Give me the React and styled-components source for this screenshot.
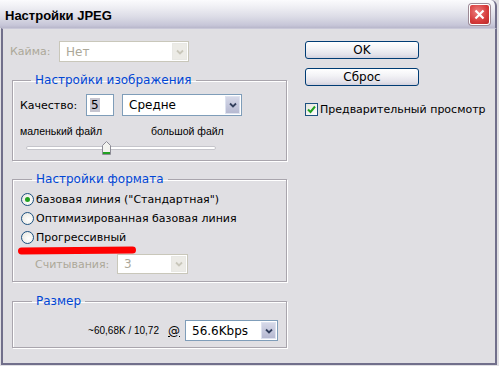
import React from 'react';
import styled, { createGlobalStyle } from 'styled-components';

const Global = createGlobalStyle`
  html, body { margin: 0; padding: 0; background: #e0dfe3; }
  body { font-family: "DejaVu Sans", "Liberation Sans", sans-serif; font-size: 11px; color: #000; }
`;

const Win = styled.div`
  width: 499px;
  height: 366px;
  display: flex;
  flex-direction: column;
  background: #e0dfe3;
  overflow: hidden;
`;

const TitleBar = styled.div`
  height: 28px;
  flex: none;
  display: flex;
  align-items: center;
  justify-content: space-between;
  padding: 0 5px 0 5px;
  box-sizing: border-box;
  margin-right: 2px;
  border-right: 2px solid #716f8b;
  border-top-right-radius: 6px;
  background: linear-gradient(to bottom, #fbfbfd 0%, #efeff4 25%, #dcdce6 60%, #c7c6d8 90%, #b8b7cb 100%);
`;

const Title = styled.div`
  font-family: "Liberation Sans", Arial, sans-serif;
  font-weight: bold;
  font-size: 13px;
  padding-top: 2px;
`;

const CloseBtn = styled.div`
  width: 21px;
  height: 21px;
  box-sizing: border-box;
  border: 1px solid #fff;
  border-radius: 3px;
  background: radial-gradient(circle at 40% 35%, #ec7f7f, #d63a3a 60%, #b82a2a);
  display: flex;
  align-items: center;
  justify-content: center;
  box-shadow: 0 0 0 1px #9c8a95;
`;

const Body = styled.div`
  flex: 1;
  margin: 0 2px 1px 1px;
  border: 2px solid #716f8b;
  border-top: 1px solid #c9c8d8;
  display: flex;
  padding: 12px 0 0 7px;
`;

const LeftCol = styled.div`
  width: 277px;
  flex: none;
  display: flex;
  flex-direction: column;
`;

const RightCol = styled.div`
  margin-left: 18px;
  display: flex;
  flex-direction: column;
  gap: 9px;
`;

const Row = styled.div`
  display: flex;
  align-items: center;
  height: ${p => p.$h || 21}px;
  padding-left: ${p => p.$indent || 0}px;
  margin-top: ${p => p.$mt || 0}px;
  justify-content: ${p => p.$end ? 'flex-end' : 'flex-start'};
`;

const Label = styled.span`
  width: ${p => p.$w ? p.$w + 'px' : 'auto'};
  color: ${p => p.$disabled ? '#aca899' : '#000'};
  white-space: nowrap;
`;

const SmallLabel = styled.span`
  width: ${p => p.$w ? p.$w + 'px' : 'auto'};
  font-family: "Liberation Sans", Arial, sans-serif;
  font-size: ${p => p.$size || 10.5}px;
  white-space: nowrap;
`;

const Group = styled.fieldset`
  margin: ${p => p.$mt}px 0 0 2px;
  padding: ${p => p.$pad};
  border: 1px solid #a9a5ad;
  box-shadow: inset 1px 1px 0 #fff, 1px 1px 0 #fff;
  min-width: 0;
  width: 275px;
  box-sizing: border-box;
`;

const Legend = styled.legend`
  color: #0046d5;
  font-size: 12px;
  line-height: 14px;
  padding: 0 4px;
  margin-left: 11px;
`;

const SelectBox = styled.div`
  width: ${p => p.$w}px;
  height: ${p => p.$h || 21}px;
  box-sizing: border-box;
  border: 1px solid ${p => p.$disabled ? '#c9c7ba' : '#7f9db9'};
  background: #fff;
  display: flex;
  align-items: center;
  justify-content: space-between;
  padding: 1px;
  color: ${p => p.$disabled ? '#aca899' : '#000'};
  font-size: 12px;
`;

const SelectText = styled.span`
  padding-left: 5px;
`;

const ArrowBtn = styled.div`
  width: 15px;
  align-self: stretch;
  box-sizing: border-box;
  border: 1px solid ${p => p.$disabled ? '#e8e8e4' : '#dde2ef'};
  background: ${p => p.$disabled ? '#ecebe6' : 'linear-gradient(to bottom, #d5d8e8, #b6b9d1)'};
  display: flex;
  align-items: center;
  justify-content: center;
`;

const TextInput = styled.div`
  width: 28px;
  height: 22px;
  box-sizing: border-box;
  border: 1px solid #7f9db9;
  background: #fff;
  display: flex;
  align-items: center;
  padding-left: 3px;
  margin-right: 8px;
  font-size: 12px;
`;

const Selected = styled.span`
  background: #c5c4cf;
  padding: 0 1px;
`;

const SliderRow = styled.div`
  height: 14px;
  margin: 4px 0 0 6px;
  width: 190px;
  display: flex;
  align-items: center;
`;

const Track = styled.div`
  flex: 1;
  height: 2px;
  border: 1px solid #c5c5cb;
  border-radius: 2px;
  background: #fff;
  display: flex;
  align-items: center;
  padding-left: ${p => p.$pos}px;
`;

const RadioRow = styled.div`
  height: 19px;
  display: flex;
  align-items: center;
  gap: 2px;
  position: relative;
`;

const Radio = styled.div`
  width: 13px;
  height: 13px;
  box-sizing: border-box;
  border-radius: 50%;
  border: 1px solid #1c5180;
  background: radial-gradient(circle at 60% 60%, #fff, #e6e5dd);
  display: flex;
  align-items: center;
  justify-content: center;
  &::after {
    content: "";
    display: ${p => p.$on ? 'block' : 'none'};
    width: 5px;
    height: 5px;
    border-radius: 50%;
    background: #21a121;
  }
`;

const Marker = styled.div`
  position: absolute;
  left: -3px;
  top: 19px;
  width: 118px;
  height: 7px;
  background: #ff0000;
  border-radius: 4px;
  transform: rotate(-0.5deg);
`;

const Button = styled.div`
  width: 114px;
  height: 18px;
  box-sizing: border-box;
  border: 1px solid #003c74;
  border-radius: 3px;
  background: linear-gradient(to bottom, #ffffff 0%, #f3f3f6 40%, #e3e2ea 80%, #d2d1dd 100%);
  display: flex;
  align-items: center;
  justify-content: center;
  font-size: 12px;
`;

const CheckRow = styled.div`
  display: flex;
  align-items: center;
  gap: 2px;
  margin-top: 8px;
  font-size: 11px;
  white-space: nowrap;
`;

const Check = styled.div`
  width: 13px;
  height: 13px;
  flex: none;
  box-sizing: border-box;
  border: 1px solid #1c5180;
  background: linear-gradient(135deg, #e6e5dd, #fff);
  display: flex;
  align-items: center;
  justify-content: center;
`;

const At = styled.span`
  text-decoration: underline;
  font-size: 12px;
  margin: 0 5px 0 9px;
`;

const Chevron = ({ color = '#4d6185' }) => (
  <svg width="8" height="6" viewBox="0 0 8 6">
    <path d="M1 1.5 L4 4.5 L7 1.5" fill="none" stroke={color} strokeWidth="1.8" />
  </svg>
);

const Select = ({ w, h, text, disabled }) => (
  <SelectBox $w={w} $h={h} $disabled={disabled}>
    <SelectText>{text}</SelectText>
    <ArrowBtn $disabled={disabled}>
      <Chevron color={disabled ? '#c9c7ba' : '#33405e'} />
    </ArrowBtn>
  </SelectBox>
);

const Thumb = () => (
  <svg width="9" height="14" viewBox="0 0 9 14">
    <path d="M0.5 13.5 V4.5 L4.5 0.5 L8.5 4.5 V13.5 Z" fill="#f3f3ef" stroke="#8d8c96" />
    <rect x="1" y="11" width="7" height="2" fill="#21a121" />
  </svg>
);

export default function App() {
  return (
    <Win>
      <Global />
      <TitleBar>
        <Title>Настройки JPEG</Title>
        <CloseBtn>
          <svg width="11" height="11" viewBox="0 0 11 11">
            <path d="M1.5 1.5 L9.5 9.5 M9.5 1.5 L1.5 9.5" stroke="#fff" strokeWidth="2.2" />
          </svg>
        </CloseBtn>
      </TitleBar>
      <Body>
        <LeftCol>
          <Row $h={21}>
            <Label $w={49} $disabled>Кайма:</Label>
            <Select w={130} text="Нет" disabled />
          </Row>

          <Group $mt={11} $pad="7px 0 5px 7px">
            <Legend>Настройки изображения</Legend>
            <Row $h={22}>
              <Label $w={66}>Качество:</Label>
              <TextInput><Selected>5</Selected></TextInput>
              <Select w={120} h={22} text="Средне" />
            </Row>
            <Row $h={13} $mt={8}>
              <SmallLabel $w={131}>маленький файл</SmallLabel>
              <SmallLabel>большой файл</SmallLabel>
            </Row>
            <SliderRow>
              <Track $pos={75}><Thumb /></Track>
            </SliderRow>
          </Group>

          <Group $mt={11} $pad="4px 0 7px 8px">
            <Legend>Настройки формата</Legend>
            <RadioRow>
              <Radio $on />
              <Label>базовая линия ("Стандартная")</Label>
            </RadioRow>
            <RadioRow>
              <Radio />
              <Label>Оптимизированная базовая линия</Label>
            </RadioRow>
            <RadioRow>
              <Radio />
              <Label>Прогрессивный</Label>
              <Marker />
            </RadioRow>
            <Row $h={20} $mt={7} $indent={14}>
              <Label $w={82} $disabled>Считывания:</Label>
              <Select w={71} h={20} text="3" disabled />
            </Row>
          </Group>

          <Group $mt={12} $pad="12px 8px 6px 8px">
            <Legend>Размер</Legend>
            <Row $h={21} $end>
              <SmallLabel $size={10}>~60,68K / 10,72</SmallLabel>
              <At>@</At>
              <Select w={93} text="56.6Kbps" />
            </Row>
          </Group>
        </LeftCol>

        <RightCol>
          <Button>OK</Button>
          <Button>Сброс</Button>
          <CheckRow>
            <Check>
              <svg width="9" height="9" viewBox="0 0 9 9">
                <path d="M1 4.5 L3.5 7 L8 1.5" fill="none" stroke="#21a121" strokeWidth="2" />
              </svg>
            </Check>
            <span>Предварительный просмотр</span>
          </CheckRow>
        </RightCol>
      </Body>
    </Win>
  );
}
